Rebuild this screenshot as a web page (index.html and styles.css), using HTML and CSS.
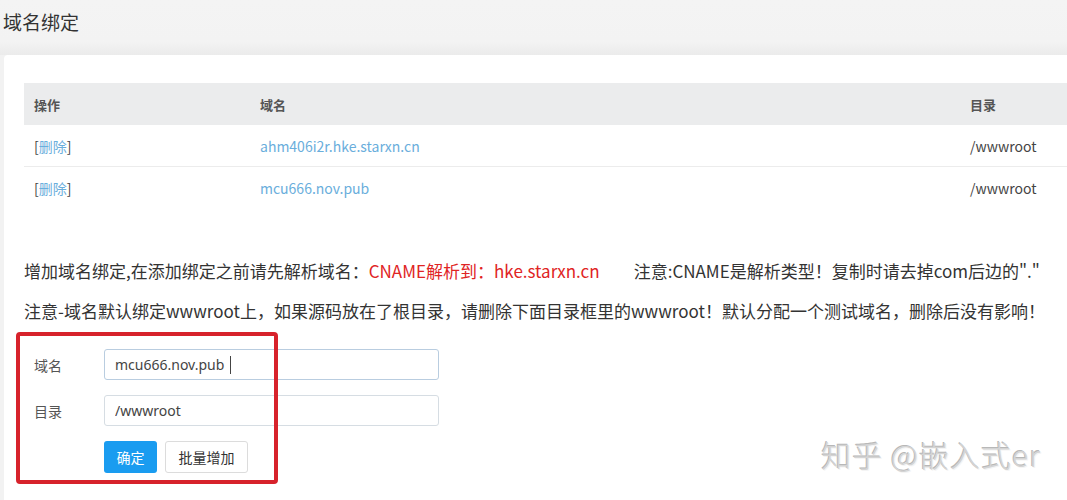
FILE: index.html
```html
<!DOCTYPE html>
<html lang="zh-CN">
<head>
  <meta charset="UTF-8" />
  <meta name="viewport" content="width=device-width, initial-scale=1.0"/>
  <title>域名绑定</title>
  <link rel="stylesheet" href="styles.css">
</head>
<body>
  <div class="page-title">域名绑定</div>

  <div class="card">
    <table class="domain-table">
      <thead>
        <tr>
          <th class="col-op">操作</th>
          <th class="col-name">域名</th>
          <th>目录</th>
        </tr>
      </thead>
      <tbody>
        <tr>
          <td>[<a href="#">删除</a>]</td>
          <td><a href="#" class="domain-link">ahm406i2r.hke.starxn.cn</a></td>
          <td>/wwwroot</td>
        </tr>
        <tr>
          <td>[<a href="#">删除</a>]</td>
          <td><a href="#" class="domain-link">mcu666.nov.pub</a></td>
          <td>/wwwroot</td>
        </tr>
      </tbody>
    </table>

    <div class="tips">
      <p>增加域名绑定,在添加绑定之前请先解析域名：<span class="red">CNAME解析到：hke.starxn.cn</span><span class="note">注意:CNAME是解析类型！复制时请去掉com后边的"."</span></p>
      <p>注意-域名默认绑定wwwroot上，如果源码放在了根目录，请删除下面目录框里的wwwroot！默认分配一个测试域名，删除后没有影响！</p>
    </div>

    <form class="bind-form">
      <div class="form-row">
        <label for="domain">域名</label>
        <input type="text" id="domain" class="focused" value="mcu666.nov.pub" />
        <span class="caret"></span>
      </div>
      <div class="form-row">
        <label for="path">目录</label>
        <input type="text" id="path" value="/wwwroot" />
      </div>
      <div class="form-btns">
        <button type="submit" class="btn-primary">确定</button>
        <button type="button" class="btn-default">批量增加</button>
      </div>
      <div class="mark-box"></div>
    </form>
  </div>

  <div class="watermark">知乎 @嵌入式er</div>
</body>
</html>
```

FILE: styles.css
```css
body {
  margin: 0;
  background: #f2f2f2;
  font-family: "Noto Sans CJK SC", "Noto Sans", sans-serif;
  color: #333;
  width: 1067px;
  height: 500px;
  overflow: hidden;
  position: relative;
}

.page-title {
  height: 55px;
  padding-left: 3px;
  line-height: 44px;
  font-size: 19px;
  color: #333;
  background: linear-gradient(#f4f4f4, #f3f3f3 75%, #ebebeb);
}

.card {
  margin-left: 4px;
  background: #fff;
  border-top-left-radius: 4px;
  padding: 28px 0 0 20px;
  height: 445px;
  box-sizing: border-box;
}

.domain-table {
  width: 1090px;
  border-collapse: collapse;
  font-size: 14px;
}

.domain-table th {
  background: #ebeced;
  height: 42px;
  padding: 0 10px;
  text-align: left;
  font-size: 13px;
  font-weight: bold;
  color: #555;
}

.domain-table td {
  height: 41px;
  padding: 0 10px;
  border-bottom: 1px solid #ececec;
  color: #444;
}

.domain-table tbody tr:last-child td {
  border-bottom: none;
}

.col-op {
  width: 206px;
}

.col-name {
  width: 690px;
}

.domain-table a {
  color: #6aaedc;
  text-decoration: none;
}

.tips {
  margin-top: 43px;
  font-size: 17px;
}

.tips p {
  margin: 0;
  line-height: 40px;
  white-space: nowrap;
}

.red {
  color: #e02424;
}

.note {
  margin-left: 34px;
}

.bind-form {
  position: relative;
  margin-top: 18px;
  padding-left: 10px;
}

.form-row {
  display: flex;
  align-items: center;
  margin-bottom: 15px;
  position: relative;
}

.form-row label {
  width: 70px;
  font-size: 14px;
  color: #555;
}

.form-row input {
  width: 335px;
  height: 31px;
  box-sizing: border-box;
  border: 1px solid #d6dde3;
  border-radius: 3px;
  padding: 0 10px;
  font-family: "Noto Sans", sans-serif;
  font-size: 14px;
  color: #444;
}

.form-row input.focused {
  border-color: #b9cde0;
}

.caret {
  position: absolute;
  left: 196px;
  top: 7px;
  width: 1px;
  height: 18px;
  background: #444;
}

.form-btns {
  display: flex;
  gap: 8px;
  margin-left: 70px;
}

.form-btns button {
  height: 32px;
  border-radius: 3px;
  font-family: "Noto Sans CJK SC", sans-serif;
  font-size: 14px;
  cursor: pointer;
}

.btn-primary {
  width: 53px;
  background: #1a9cf0;
  color: #fff;
  border: none;
}

.btn-default {
  width: 83px;
  background: #fff;
  color: #333;
  border: 1px solid #dcdcdc;
}

.mark-box {
  position: absolute;
  left: -8px;
  top: -17px;
  width: 262px;
  height: 152px;
  box-sizing: border-box;
  border: 4px solid #d7222b;
  border-radius: 4px;
}

.watermark {
  position: absolute;
  right: 26px;
  bottom: 24px;
  font-size: 30px;
  font-weight: 300;
  color: #d4d4d4;
  letter-spacing: 1px;
  text-shadow: -1px -1px 0 #b8b8b8, 1px 1px 0 #f4f4f4;
}
```
